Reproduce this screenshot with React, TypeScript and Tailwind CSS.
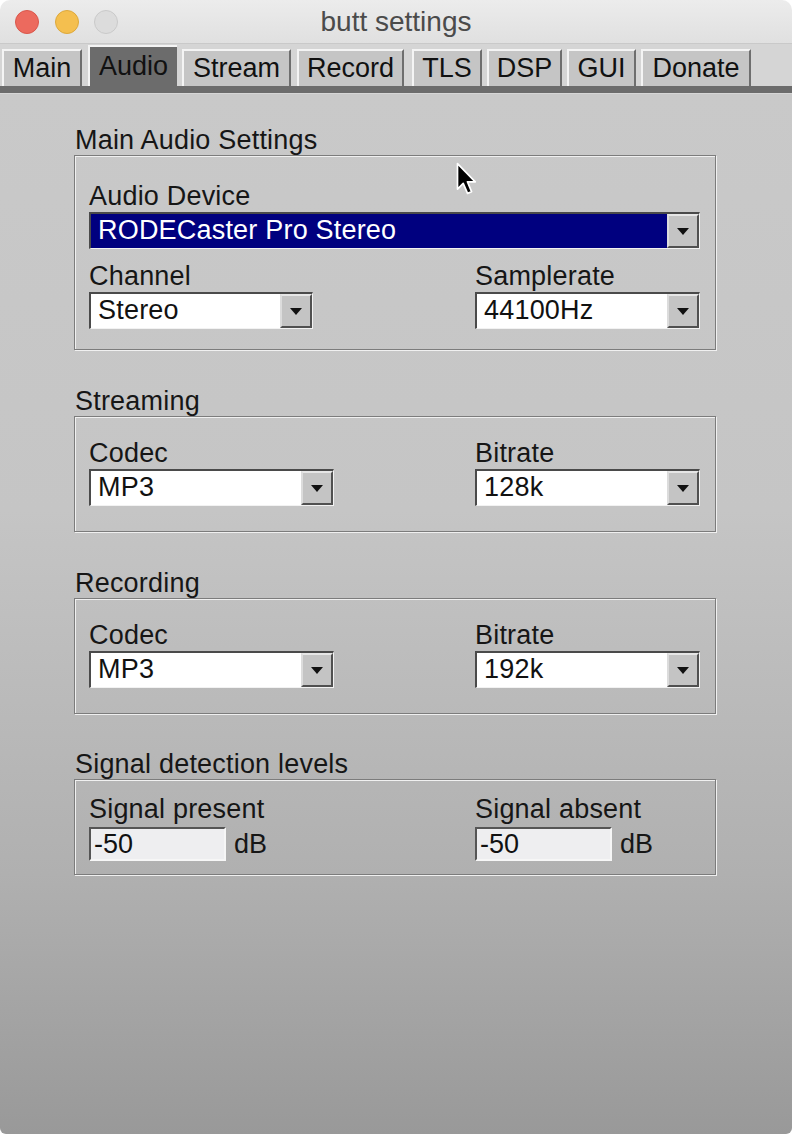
import React from "react";

const tabs: { label: string; cls: string; active?: boolean }[] = [
  { label: "Main", cls: "ml-[2px] w-[80px]" },
  { label: "Audio", cls: "ml-[6px] w-[89px]", active: true },
  { label: "Stream", cls: "ml-[5px] w-[109px]" },
  { label: "Record", cls: "ml-[6px] w-[107px]" },
  { label: "TLS", cls: "ml-[8px] w-[70px]" },
  { label: "DSP", cls: "ml-[5px] w-[75px]" },
  { label: "GUI", cls: "ml-[5px] w-[69px]" },
  { label: "Donate", cls: "ml-[5px] w-[110px]" },
];

function Arrow() {
  return (
    <div className="flex h-full w-[32px] shrink-0 items-center justify-center border-t-2 border-l-2 border-r-2 border-b-2 border-t-[#e6e6e6] border-l-[#dcdcdc] border-r-[#505050] border-b-[#505050] bg-[#c4c4c4]">
      <svg width="12" height="7" viewBox="0 0 12 7">
        <path d="M0 0 L12 0 L6 7 Z" fill="#111" />
      </svg>
    </div>
  );
}

function Dropdown({
  value,
  w,
  selected,
}: {
  value: string;
  w: string;
  selected?: boolean;
}) {
  return (
    <div
      className={`${w} flex h-[37px] border-t-2 border-l-2 border-b border-r border-t-[#4a4a4a] border-l-[#4a4a4a] border-b-[#f2f2f2] border-r-[#f2f2f2]`}
    >
      <div
        className={`flex-1 overflow-hidden whitespace-nowrap pl-[7px] text-[27px] leading-[33px] tracking-[0.2px] ${
          selected ? "bg-[#00007f] text-white" : "bg-white text-[#111]"
        }`}
      >
        {value}
      </div>
      <Arrow />
    </div>
  );
}

function Label({ children }: { children: React.ReactNode }) {
  return (
    <div className="whitespace-nowrap text-[27px] leading-[31px] tracking-[0.2px] text-[#161616]">
      {children}
    </div>
  );
}

function Section({
  title,
  mt,
  box,
  children,
}: {
  title: string;
  mt: string;
  box: string;
  children: React.ReactNode;
}) {
  return (
    <div className={`${mt} flex flex-col`}>
      <div className="pl-[1px] text-[27px] leading-[30px] tracking-[0.2px] text-[#161616]">
        {title}
      </div>
      <div
        className={`${box} w-[642px] border border-[#7c7c7c] px-[14px] shadow-[inset_1px_1px_0_#f0f0f0,1px_1px_0_#f0f0f0]`}
      >
        {children}
      </div>
    </div>
  );
}

function TwoCol({
  left,
  right,
}: {
  left: React.ReactNode;
  right: React.ReactNode;
}) {
  return (
    <div className="grid grid-cols-[386px_1fr]">
      <div className="flex flex-col">{left}</div>
      <div className="flex flex-col">{right}</div>
    </div>
  );
}

function DbInput({ value }: { value: string }) {
  return (
    <div className="mt-[2px] flex items-center">
      <div className="h-[34px] w-[137px] border-t-2 border-l-2 border-b-2 border-r-2 border-t-[#555] border-l-[#555] border-b-[#f6f6f6] border-r-[#f6f6f6] bg-[#eeeef0] pl-[3px] text-[27px] leading-[30px] text-[#111]">
        {value}
      </div>
      <div className="ml-[8px] text-[27px] leading-[30px] text-[#161616]">dB</div>
    </div>
  );
}

export default function App() {
  return (
    <div className="h-[1134px] w-[792px] overflow-hidden bg-white font-['Liberation_Sans',Arial,sans-serif]">
      <div className="relative flex h-full flex-col overflow-hidden rounded-t-[10px] rounded-b-[6px]">
        {/* Title bar */}
        <div className="grid h-[44px] grid-cols-[1fr_auto_1fr] items-center border-b border-[#c9c9c9] bg-[linear-gradient(to_bottom,#ececec,#e0e0e0)]">
          <div className="flex items-center pl-[15px]">
            <div className="h-[24px] w-[24px] rounded-full border border-[#d9574b] bg-[#ec6a5e]" />
            <div className="ml-[16px] h-[24px] w-[24px] rounded-full border border-[#dca83c] bg-[#f4bf4f]" />
            <div className="ml-[15px] h-[24px] w-[24px] rounded-full border border-[#c9c9c9] bg-[#dcdcdc]" />
          </div>
          <div className="text-[28px] leading-[44px] text-[#4b4b4b]">
            butt settings
          </div>
          <div />
        </div>

        {/* Tabs */}
        <div className="flex h-[42px] items-end bg-[#d5d5d5]">
          {tabs.map((t) =>
            t.active ? (
              <div
                key={t.label}
                className={`${t.cls} h-[41px] border-t-2 border-l-2 border-t-[#f4f4f4] border-l-[#f4f4f4] bg-[#6c6c6c] text-center text-[27px] leading-[39px] text-[#111]`}
              >
                {t.label}
              </div>
            ) : (
              <div
                key={t.label}
                className={`${t.cls} h-[37px] border-t-2 border-l-2 border-r-2 border-t-[#f4f4f4] border-l-[#f4f4f4] border-r-[#6e6e6e] bg-[#c5c5c5] text-center text-[27px] leading-[35px] text-[#111]`}
              >
                {t.label}
              </div>
            )
          )}
        </div>
        <div className="h-[7px] bg-[#6c6c6c]" />
        <div className="h-[1px] bg-[#d6d6d6]" />

        {/* Content */}
        <div className="flex flex-1 flex-col bg-[linear-gradient(to_bottom,#c9c9c9_0%,#c5c5c5_40%,#b0b0b0_75%,#999999_100%)] pl-[74px]">
          <Section title="Main Audio Settings" mt="mt-[31px]" box="pt-[25px] pb-[20px]">
            <Label>Audio Device</Label>
            <Dropdown value="RODECaster Pro Stereo" w="w-[611px]" selected />
            <div className="mt-[12px]">
              <TwoCol
                left={
                  <>
                    <Label>Channel</Label>
                    <Dropdown value="Stereo" w="w-[224px]" />
                  </>
                }
                right={
                  <>
                    <Label>Samplerate</Label>
                    <Dropdown value="44100Hz" w="w-[225px]" />
                  </>
                }
              />
            </div>
          </Section>

          <Section title="Streaming" mt="mt-[36px]" box="pt-[21px] pb-[25px]">
            <TwoCol
              left={
                <>
                  <Label>Codec</Label>
                  <Dropdown value="MP3" w="w-[245px]" />
                </>
              }
              right={
                <>
                  <Label>Bitrate</Label>
                  <Dropdown value="128k" w="w-[225px]" />
                </>
              }
            />
          </Section>

          <Section title="Recording" mt="mt-[36px]" box="pt-[21px] pb-[25px]">
            <TwoCol
              left={
                <>
                  <Label>Codec</Label>
                  <Dropdown value="MP3" w="w-[245px]" />
                </>
              }
              right={
                <>
                  <Label>Bitrate</Label>
                  <Dropdown value="192k" w="w-[225px]" />
                </>
              }
            />
          </Section>

          <Section title="Signal detection levels" mt="mt-[35px]" box="pt-[14px] pb-[13px]">
            <TwoCol
              left={
                <>
                  <Label>Signal present</Label>
                  <DbInput value="-50" />
                </>
              }
              right={
                <>
                  <Label>Signal absent</Label>
                  <DbInput value="-50" />
                </>
              }
            />
          </Section>
        </div>

        {/* Mouse cursor */}
        <svg
          className="absolute left-[455px] top-[162px]"
          width="22"
          height="34"
          viewBox="0 0 14 22"
        >
          <path
            d="M1.5 1 L1.5 17.5 L5.2 13.8 L8 20.3 L10.6 19.2 L7.9 12.8 L13 12.8 Z"
            fill="#000"
            stroke="#fff"
            strokeWidth="1.1"
            strokeLinejoin="round"
          />
        </svg>
      </div>
    </div>
  );
}
